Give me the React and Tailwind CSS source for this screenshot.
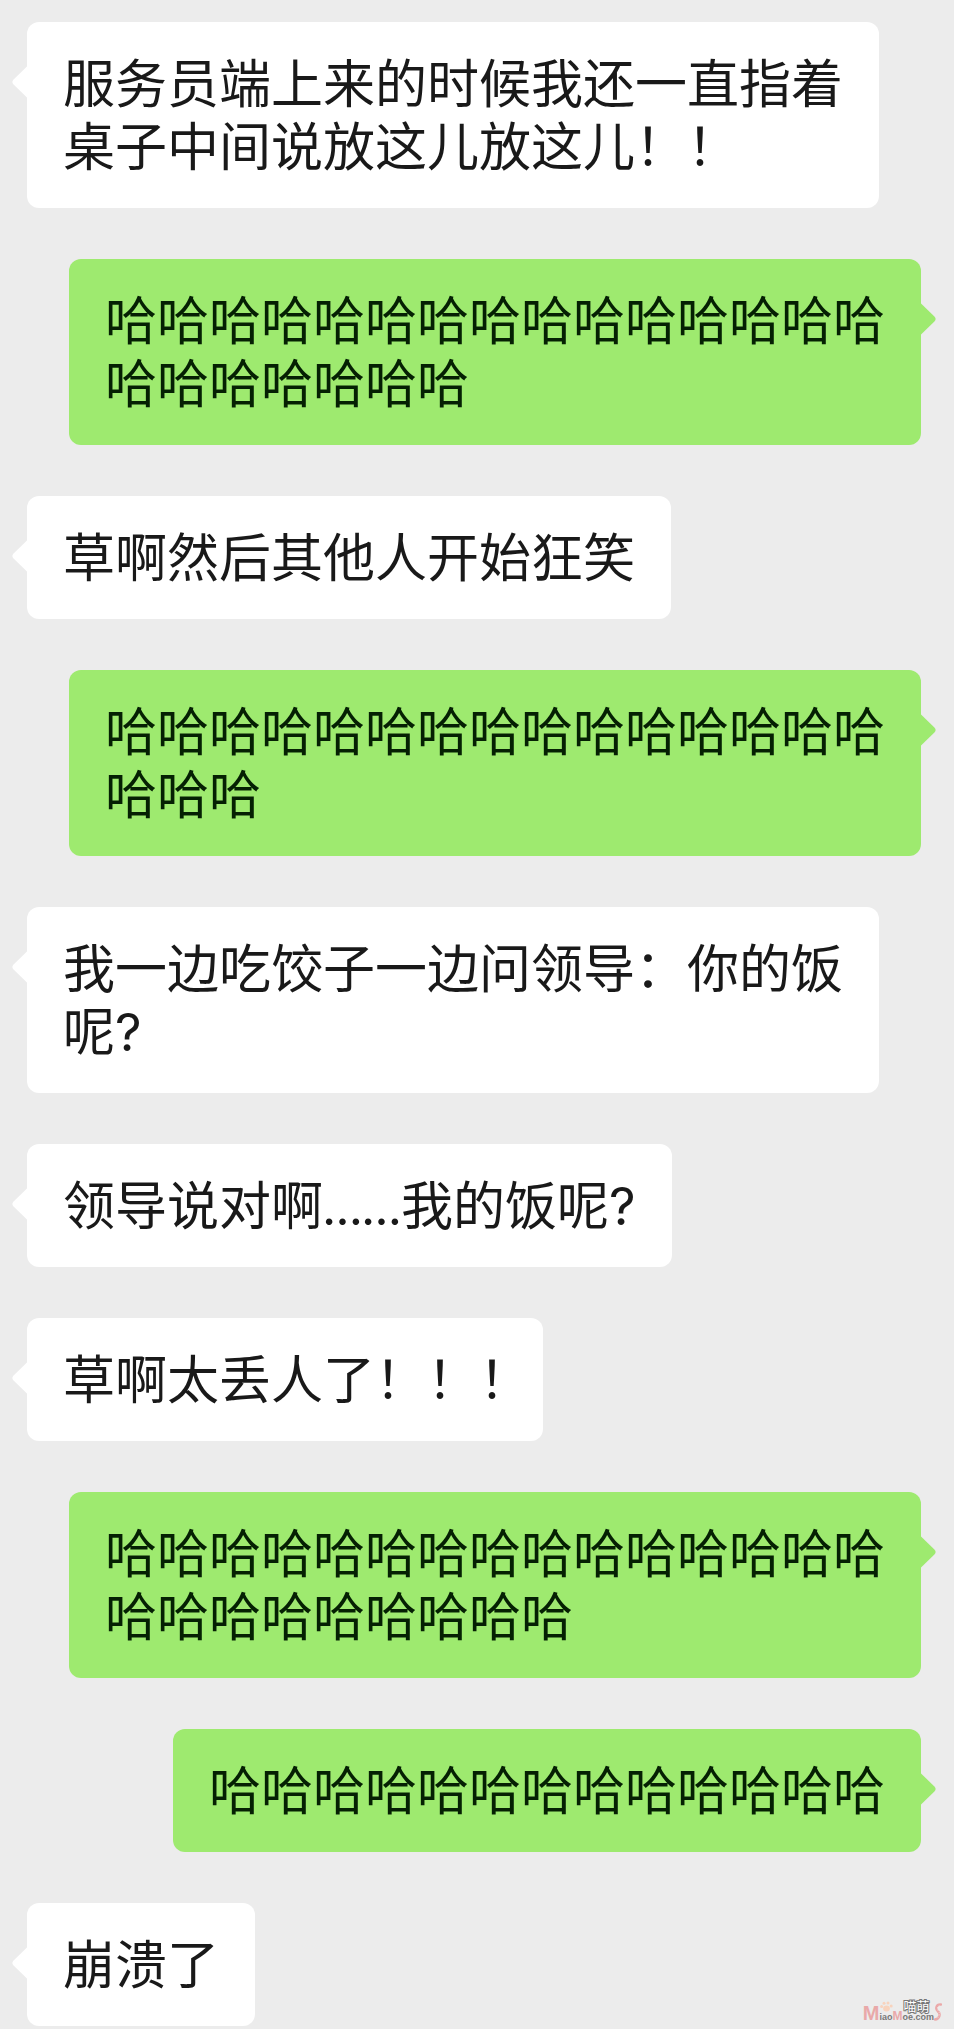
import React from 'react'
import clsx from 'clsx'

const messages = [
  { from: 'friend', text: '服务员端上来的时候我还一直指着桌子中间说放这儿放这儿！！' },
  { from: 'me', text: '哈哈哈哈哈哈哈哈哈哈哈哈哈哈哈哈哈哈哈哈哈哈' },
  { from: 'friend', text: '草啊然后其他人开始狂笑' },
  { from: 'me', text: '哈哈哈哈哈哈哈哈哈哈哈哈哈哈哈哈哈哈' },
  { from: 'friend', text: '我一边吃饺子一边问领导：你的饭呢?' },
  { from: 'friend', text: '领导说对啊……我的饭呢?' },
  { from: 'friend', text: '草啊太丢人了！！！' },
  { from: 'me', text: '哈哈哈哈哈哈哈哈哈哈哈哈哈哈哈哈哈哈哈哈哈哈哈哈' },
  { from: 'me', text: '哈哈哈哈哈哈哈哈哈哈哈哈哈' },
  { from: 'friend', text: '崩溃了' }
]

// Latin punctuation is set in its own face, the rest stays in the CJK one
const renderText = (text) =>
  text.split(/(……|\?)/).map((part, index) => {
    if (part === '……') return <span key={index} className="font-['Lato',sans-serif] leading-none">{part}</span>
    if (part === '?') return <span key={index} className="font-['Inter',sans-serif] leading-none">{part}</span>
    return part
  })

const Tail = ({ mine }) => (
  <svg
    viewBox="0 0 16 36"
    aria-hidden="true"
    className={clsx(
      'absolute top-[42px] h-9 w-4',
      mine ? '-right-[15px] -scale-x-100 text-[#9eea6f]' : '-left-[15px] text-white'
    )}
  >
    <path d="M16 1.5 L1.6 15.4 Q-.8 18 1.6 20.6 L16 34.5 Z" fill="currentColor" />
  </svg>
)

const Message = ({ from, text }) => {
  const mine = from === 'me'

  return (
    <li className={clsx('flex', mine ? 'justify-end pl-[42px]' : 'justify-start pr-[42px]')}>
      <div
        className={clsx(
          'relative rounded-xl pt-[27px] pb-[33px] pl-9',
          // a closing ！ already brings half a character of space
          text.endsWith('！') ? 'pr-3' : 'pr-9',
          mine ? 'bg-[#9eea6f] text-[#052003]' : 'bg-white text-[#191919]'
        )}
      >
        <Tail mine={mine} />
        <p className="text-[52px] leading-[63px]">{renderText(text)}</p>
      </div>
    </li>
  )
}

const Watermark = () => (
  <div className="absolute right-3 bottom-2 flex items-end font-['Liberation_Sans',sans-serif] font-bold">
    <span className="text-[20px] leading-4 text-[#e9a9a9]">M</span>
    <div className="flex flex-col">
      <div className="flex h-3 items-center">
        <svg viewBox="0 0 24 12" className="h-3 w-6" aria-hidden="true" fill="#f8d3bd">
          <ellipse cx="7.500" cy="8.500" rx="3.400" ry="3" />
          <circle cx="2.600" cy="6.500" r="1.500" />
          <circle cx="5" cy="3.300" r="1.500" />
          <circle cx="9" cy="3" r="1.500" />
          <circle cx="12.200" cy="6" r="1.500" />
        </svg>
        <span className="font-['Noto_Sans_CJK_SC',sans-serif] text-[13px] leading-3 font-normal text-white [-webkit-text-stroke:2px_#777] [paint-order:stroke_fill]">喵萌</span>
      </div>
      <div className="flex items-baseline text-[9px] leading-2 text-[#777]">
        <span>iao</span>
        <span className="text-[12px] leading-2 text-[#e9a9a9]">M</span>
        <span>oe.com</span>
      </div>
    </div>
    <svg viewBox="0 0 8 18" className="h-[18px] w-2" aria-hidden="true" fill="none">
      <path d="M7 1.5 C2 1 1 6 4 8.5 C7 11 5.500 16 1 16.500" stroke="#eba9a9" strokeWidth="2.400" strokeLinecap="round" />
      <path d="M5.500 2.500 C2.500 4 3.500 7 5 9 C6 11 5 14 3 15.500" stroke="#fbeeee" strokeWidth=".7" strokeDasharray="1 1.500" />
    </svg>
  </div>
)

const App = () => {
  return (
    <main
      lang="zh-CN"
      className="relative min-h-screen bg-[#ececec] pt-[22px] pr-[33px] pb-[3px] pl-[27px] font-['Noto_Sans_CJK_SC',sans-serif]"
    >
      <ul className="flex flex-col gap-[51px]">
        {messages.map((message, index) => (
          <Message key={index} from={message.from} text={message.text} />
        ))}
      </ul>
      <Watermark />
    </main>
  )
}

export default App
